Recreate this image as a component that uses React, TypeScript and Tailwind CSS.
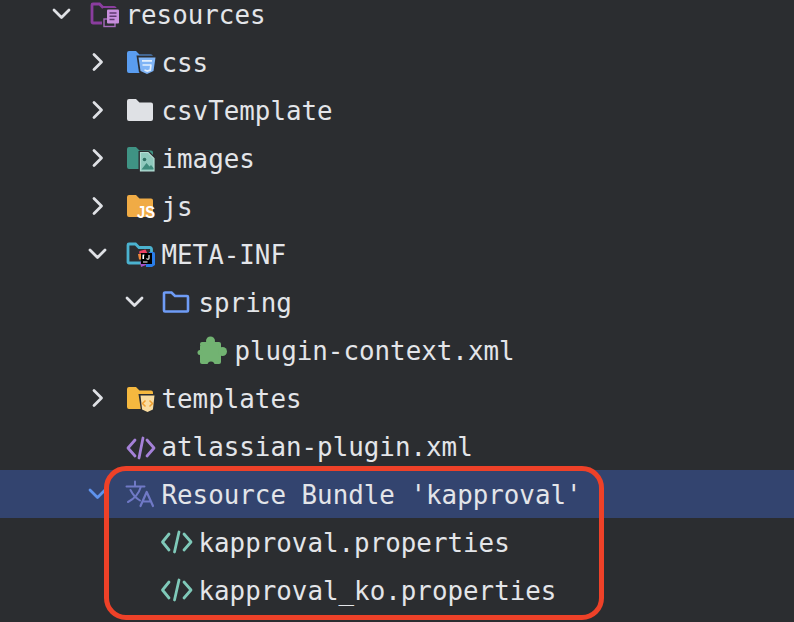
import { ReactNode } from "react";

const FOLDER = "M4 3h7l3.5 3.5H26a2 2 0 0 1 2 2V23a2 2 0 0 1-2 2H4a2 2 0 0 1-2-2V5a2 2 0 0 1 2-2z";
const BG = "#2b2d30";

function Icon({ children }: { children: ReactNode }) {
  return (
    <svg width="28" height="28" viewBox="0 0 28 28" fill="none" className="shrink-0 overflow-visible">
      {children}
    </svg>
  );
}

function Chevron({ open, selected }: { open?: boolean; selected?: boolean }) {
  const color = selected ? "#5f93ee" : "#dfe1e5";
  return (
    <svg width="28" height="28" viewBox="0 0 28 28" fill="none" className="shrink-0">
      <path
        d={open ? "M7 10l7.500 7.500L22 10" : "M11 6.500l7.500 7.500L11 21.500"}
        stroke={color}
        strokeWidth="2.800"
        strokeLinecap="round"
        strokeLinejoin="round"
      />
    </svg>
  );
}

function ResourcesIcon() {
  return (
    <Icon>
      <path d="M4 4h6.500l3.500 3.500H25a1.500 1.500 0 0 1 1.500 1.500v14H4a1 1 0 0 1-1-1V5a1 1 0 0 1 1-1z" stroke="#8a3d9e" strokeWidth="2.800" />
      <rect x="13" y="8" width="18" height="19" rx="1.500" fill={BG} />
      <rect x="15" y="19" width="11" height="7.500" stroke="#a76bbd" strokeWidth="1.400" />
      <rect x="18" y="9.500" width="12" height="14" rx="1" fill="#c88fdc" />
      <path d="M20.500 13h7M20.500 16.200h7M20.500 19.500h5" stroke="#5f3a70" strokeWidth="1.500" />
    </Icon>
  );
}

function CssIcon() {
  return (
    <Icon>
      <path d={FOLDER} fill="#5a9df0" />
      <path d="M11.500 7.500h21l-2.500 17-8 3.500-8-3.500z" fill={BG} />
      <path d="M13.500 9.500h17l-2 13.500-6.500 3-6.500-3z" fill="#7fb4f6" />
      <path d="M17 12.800h10M17.500 17h9M19.500 22l2.800 1 3-1 .6-5" stroke="#e3effd" strokeWidth="1.700" />
    </Icon>
  );
}

function ImagesIcon() {
  return (
    <Icon>
      <path d={FOLDER} fill="#3f9384" />
      <path d="M13.500 7h10.500l7 7v14.500H13.500z" fill={BG} />
      <path d="M15.500 8.500h7.500l6 6v12.500H15.500z" fill="#8fc9bd" stroke="#b4dcd3" strokeWidth="1.200" />
      <circle cx="19.500" cy="15.500" r="1.800" fill="#2f6f63" />
      <path d="M16.500 25.500l5-6.500 3 3.500 1.500-1.500 2.500 3v1.500z" fill="#3f8b7c" />
    </Icon>
  );
}

function JsIcon() {
  return (
    <Icon>
      <path d={FOLDER} fill="#f0ab45" />
      <text
        x="12"
        y="26"
        fontFamily="Liberation Sans, sans-serif"
        fontWeight="700"
        fontSize="17"
        fill="#ffffff"
        textLength="18"
        lengthAdjust="spacingAndGlyphs"
      >
        JS
      </text>
    </Icon>
  );
}

function MetaIcon() {
  return (
    <Icon>
      <path d="M4 4h6.500l3.500 3.500H25a1.500 1.500 0 0 1 1.500 1.500v14H4a1 1 0 0 1-1-1V5a1 1 0 0 1 1-1z" stroke="#4bb2cf" strokeWidth="2.800" />
      <path d="M14.500 11l6-1.500 2 4H14z" fill="#ee3f63" />
      <path d="M13 14h3.500v5.500H14z" fill="#f08a3c" />
      <path d="M15 22h6v3l-5 2z" fill="#a84fc9" />
      <path d="M24 12h4.500a1.500 1.500 0 0 1 1.500 1.500V25l-3 2h-6v-5z" fill="#2a7de8" />
      <rect x="16" y="13" width="11" height="11" fill="#000000" />
      <path d="M18.500 15v4M17.600 15h1.800M18 15v4M24 15v3.200a1.100 1.100 0 0 1-2.200 0M18 22h4.500" stroke="#ffffff" strokeWidth="1.100" />
    </Icon>
  );
}

function SpringIcon() {
  return (
    <Icon>
      <path d="M3 4.500h6.500l3.500 3.500H25a1 1 0 0 1 1 1v13.500a1 1 0 0 1-1 1H3a1 1 0 0 1-1-1V5.500a1 1 0 0 1 1-1z" stroke="#6f9cf6" strokeWidth="2.600" />
    </Icon>
  );
}

function PluginIcon() {
  return (
    <Icon>
      <rect x="2" y="6" width="21" height="22" rx="2" fill="#72b372" />
      <circle cx="12.500" cy="5" r="4.500" fill="#72b372" />
      <circle cx="24.500" cy="15.500" r="4.500" fill="#72b372" />
      <circle cx="2" cy="16.500" r="2.500" fill="#72b372" />
      <circle cx="13" cy="29" r="3.500" fill={BG} />
      <circle cx="1" cy="9.500" r="1.200" fill={BG} />
    </Icon>
  );
}

function TemplatesIcon() {
  return (
    <Icon>
      <path d={FOLDER} fill="#f5b83f" />
      <path d="M13.500 10h18l-2 17-6.500 3-7-3z" fill={BG} />
      <path d="M15.500 11.500h14l-1.600 14-5.400 2.500-5.400-2.500z" fill="#f9dca0" />
      <path d="M20.500 16.500l-3 3 3 3M24.500 16.500l3 3-3 3" stroke="#f0a030" strokeWidth="1.500" />
    </Icon>
  );
}

function XmlIcon({ color, tall }: { color: string; tall?: boolean }) {
  return (
    <Icon>
      <g transform={tall ? "translate(-1 0)" : "translate(2 2)"}>
        <path
          d={tall ? "M8 6L1.500 14 8 22M23 6l7 8-7 8M18 4l-4.500 20" : "M8 6L1 14l7 8M20 6l7 8-7 8M16 4l-4 20"}
          stroke={color}
          strokeWidth="2.800"
          strokeLinecap="round"
          strokeLinejoin="round"
        />
      </g>
    </Icon>
  );
}

function BundleIcon() {
  return (
    <Icon>
      <path
        d="M1.500 6.500h18M10 1.500v5M16 6.500C14 13 9 19 3 22M5.500 10c2 4 5 8 9.500 10.500"
        stroke="#7079c6"
        strokeWidth="2"
        strokeLinecap="round"
        strokeLinejoin="round"
      />
      <path
        d="M15.500 26l6.200-14L28 26M17.500 21.500h8.500"
        stroke="#7079c6"
        strokeWidth="2.200"
        strokeLinecap="round"
        strokeLinejoin="round"
      />
    </Icon>
  );
}

type RowProps = {
  pad: string;
  label: string;
  icon: ReactNode;
  arrow?: "open" | "closed";
  selected?: boolean;
};

function Row({ pad, label, icon, arrow, selected }: RowProps) {
  return (
    <div className={`flex h-12 items-center ${pad} ${selected ? "bg-[#33446f]" : ""}`}>
      <div className="w-7 shrink-0">
        {arrow && <Chevron open={arrow === "open"} selected={selected} />}
      </div>
      <div className="ml-[14px] flex w-7 shrink-0 items-center">{icon}</div>
      <span className="ml-[8.500px] mt-1 whitespace-pre text-[25.85px] leading-none text-[#e3e5e9]">{label}</span>
    </div>
  );
}

export default function App() {
  return (
    <div className="relative h-[622px] w-[794px] overflow-hidden bg-[#2b2d30] font-['DejaVu_Sans_Mono',monospace]">
      <div className="-mt-[10px]">
        <Row pad="pl-[47px]" arrow="open" icon={<ResourcesIcon />} label="resources" />
        <Row pad="pl-[83px]" arrow="closed" icon={<CssIcon />} label="css" />
        <Row pad="pl-[83px]" arrow="closed" icon={<Icon><path d={FOLDER} fill="#dfe1e5" /></Icon>} label="csvTemplate" />
        <Row pad="pl-[83px]" arrow="closed" icon={<ImagesIcon />} label="images" />
        <Row pad="pl-[83px]" arrow="closed" icon={<JsIcon />} label="js" />
        <Row pad="pl-[83px]" arrow="open" icon={<MetaIcon />} label="META-INF" />
        <Row pad="pl-[120px]" arrow="open" icon={<SpringIcon />} label="spring" />
        <Row pad="pl-[156px]" icon={<PluginIcon />} label="plugin-context.xml" />
        <Row pad="pl-[83px]" arrow="closed" icon={<TemplatesIcon />} label="templates" />
        <Row pad="pl-[83px]" icon={<XmlIcon color="#a581d8" />} label="atlassian-plugin.xml" />
        <Row pad="pl-[83px]" arrow="open" selected icon={<BundleIcon />} label="Resource Bundle 'kapproval'" />
        <Row pad="pl-[120px]" icon={<XmlIcon color="#7fc9b9" tall />} label="kapproval.properties" />
        <Row pad="pl-[120px]" icon={<XmlIcon color="#7fc9b9" tall />} label="kapproval_ko.properties" />
      </div>
      {/* red annotation drawn over the tree */}
      <div className="absolute left-[104px] top-[466px] h-[154px] w-[500px] rounded-[22px] border-[5px] border-[#ee4128]" />
    </div>
  );
}
